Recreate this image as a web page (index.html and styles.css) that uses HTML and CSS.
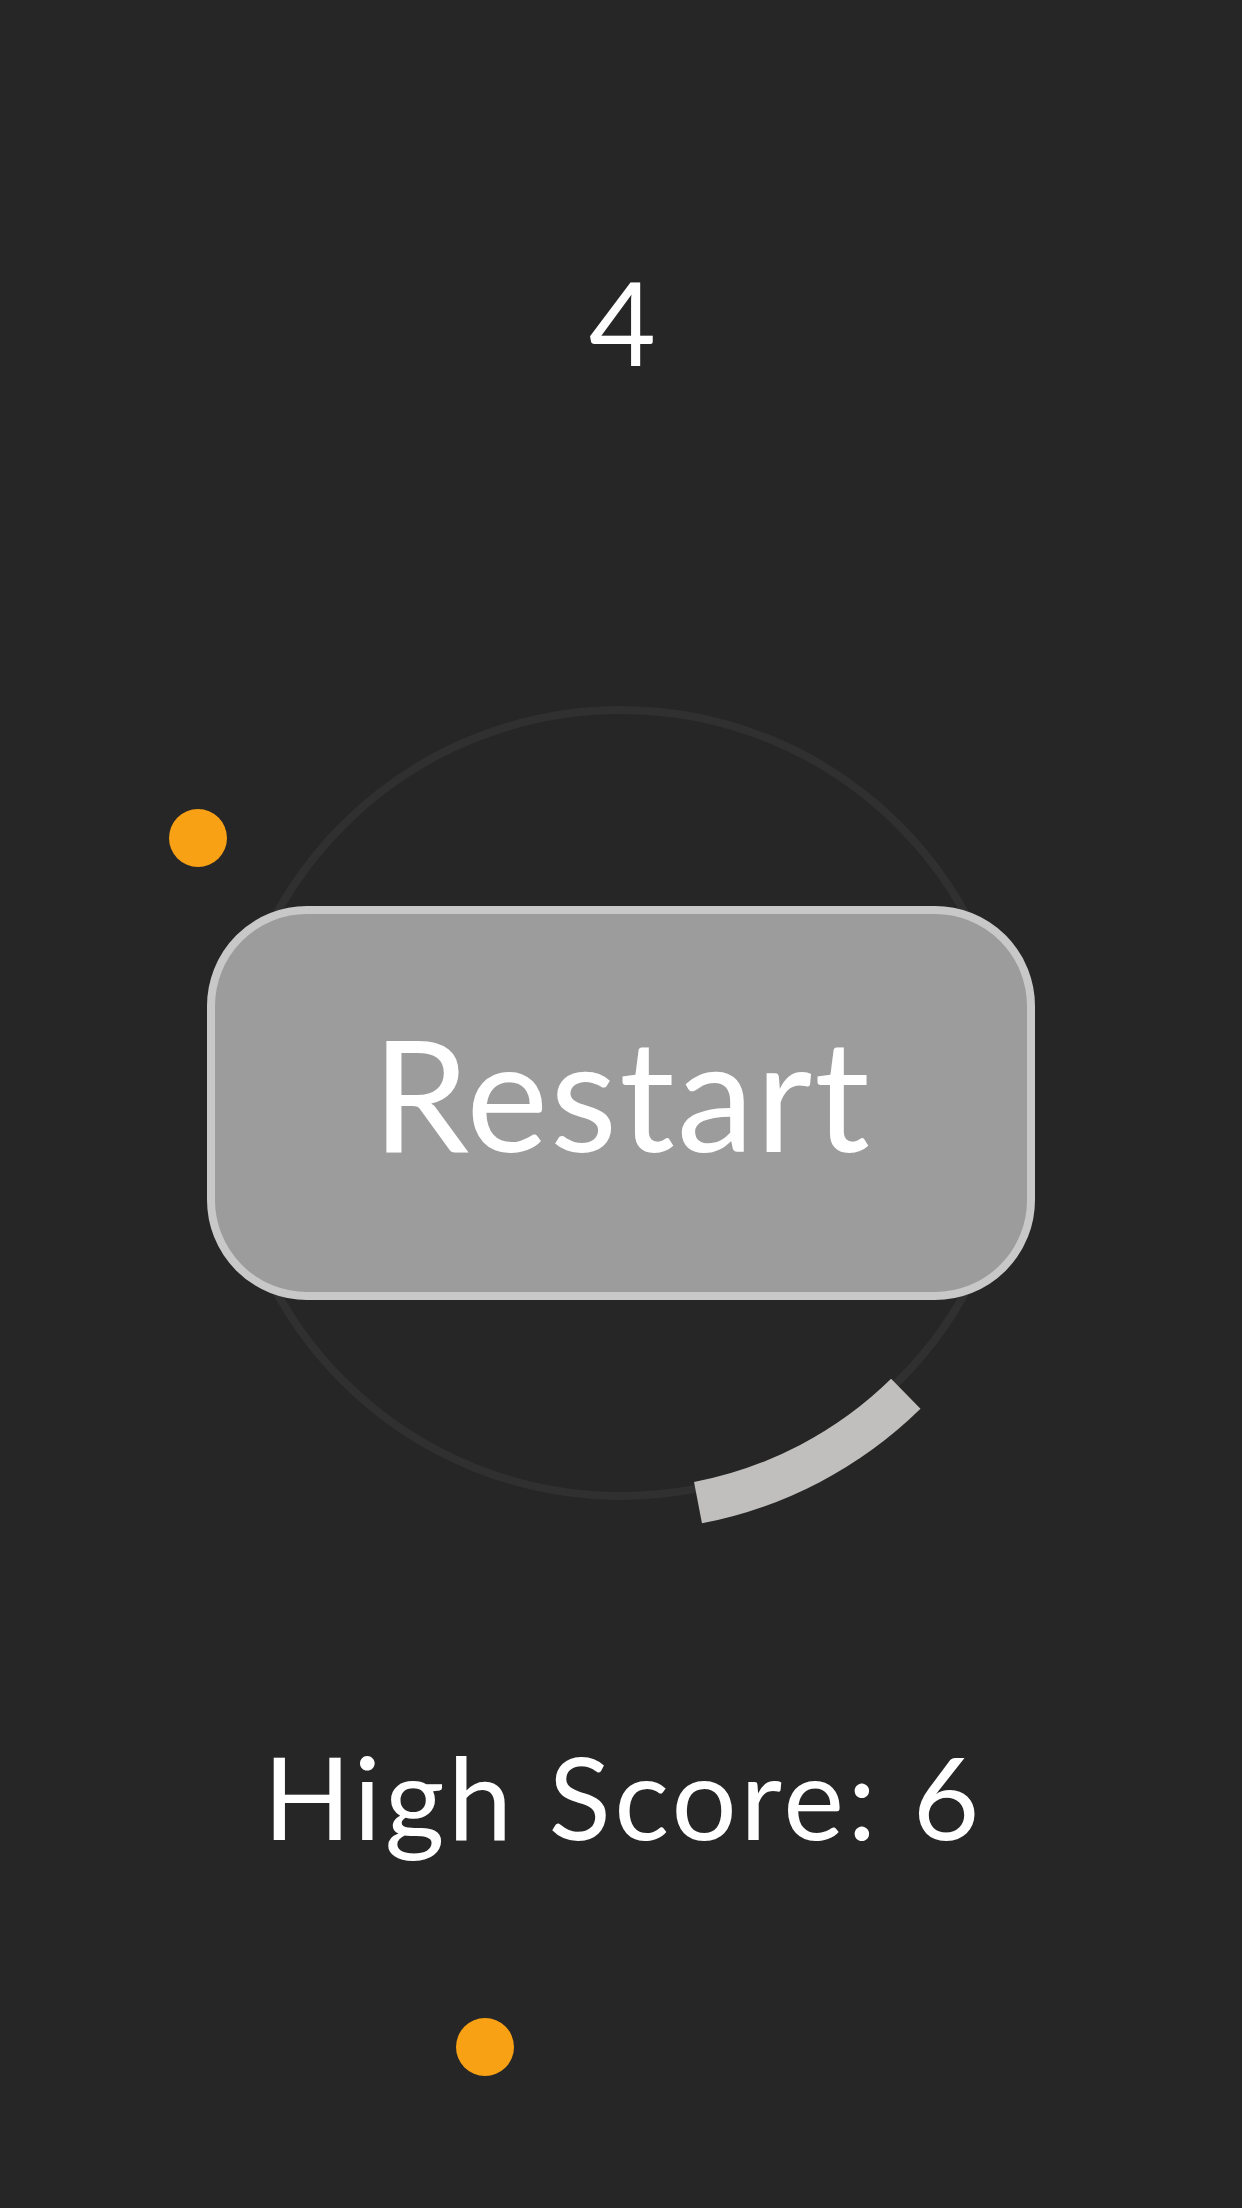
FILE: index.html
```html
<!DOCTYPE html>
<html lang="en">
<head>
    <meta charset="UTF-8">
    <meta name="viewport" content="width=device-width, initial-scale=1.0">
    <title>Orbit</title>
    <link rel="stylesheet" href="styles.css">
</head>
<body>
    <main class="game">
        <!-- Current score -->
        <div class="score">4</div>

        <!-- Orbit track with the player's paddle -->
        <div class="orbit">
            <svg class="orbit-track" viewBox="0 0 900 900" width="900" height="900">
                <circle cx="450" cy="450" r="393" class="track-line" />
                <path d="M 734.8 740.8 A 407 407 0 0 1 527.0 849.7" class="paddle" />
            </svg>
            <button class="restart" type="button">Restart</button>
        </div>

        <div class="high-score">High Score: 6</div>

        <!-- Balls -->
        <span class="ball" style="--x: 198px; --y: 838px;"></span>
        <span class="ball" style="--x: 485px; --y: 2047px;"></span>
    </main>
</body>
</html>
```

FILE: styles.css
```css
:root {
    --bg-color: #262626;
    --text-color: #ffffff;
    --track-color: #303030;
    --paddle-color: #c0bfbd;
    --button-bg-color: #9c9c9c;
    --button-border-color: #c8c8c8;
    --ball-color: #f9a114;
}

body {
    margin: 0;
    padding: 0;
    background-color: var(--bg-color);
    font-family: "Avenir Next", Lato, sans-serif;
    color: var(--text-color);
    overflow: hidden;
}

.game {
    position: relative;
    min-height: 100vh;
    display: flex;
    flex-direction: column;
    align-items: center;
    padding-top: 252px;
    box-sizing: border-box;
}

.score {
    font-size: 116px;
    line-height: 1.2;
    padding-left: 3px;
}

/* Orbit */
.orbit {
    position: relative;
    width: 900px;
    height: 900px;
    margin-top: 262px;
}

.orbit-track {
    display: block;
}

.track-line {
    fill: none;
    stroke: var(--track-color);
    stroke-width: 8;
}

.paddle {
    fill: none;
    stroke: var(--paddle-color);
    stroke-width: 42;
}

.restart {
    position: absolute;
    top: 50%;
    left: 50%;
    transform: translate(-50%, -50%);
    width: 828px;
    height: 394px;
    box-sizing: border-box;
    display: flex;
    justify-content: center;
    align-items: center;
    padding: 0 0 22px 2px;
    background-color: var(--button-bg-color);
    border: 8px solid var(--button-border-color);
    border-radius: 100px;
    font-family: inherit;
    font-size: 155px;
    line-height: 1.2;
    letter-spacing: 2px;
    color: var(--text-color);
    cursor: pointer;
}

.high-score {
    margin-top: 173px;
    padding-left: 4px;
    font-size: 115px;
    line-height: 1.2;
    letter-spacing: 3.5px;
}

.ball {
    position: absolute;
    left: calc(var(--x) - 29px);
    top: calc(var(--y) - 29px);
    width: 58px;
    height: 58px;
    border-radius: 50%;
    background-color: var(--ball-color);
}
```
